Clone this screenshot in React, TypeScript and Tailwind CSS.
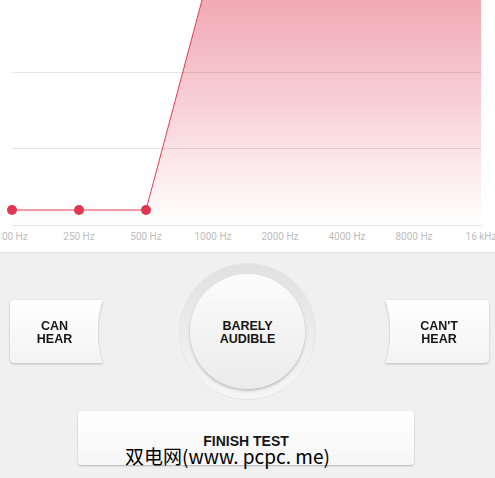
import React from "react";

const labels = ["100 Hz", "250 Hz", "500 Hz", "1000 Hz", "2000 Hz", "4000 Hz", "8000 Hz", "16 kHz"];
const points = [12, 79, 146];

const Chart = () => (
  <svg width="495" height="252" className="block">
    <defs>
      <linearGradient id="fill" x1="0" y1="0" x2="0" y2="1">
        <stop offset="0" stopColor="#f1a9b3" />
        <stop offset="1" stopColor="#ffffff" />
      </linearGradient>
    </defs>
    <polygon points="12,210 146,210 202,0 481,0 481,225 12,225" fill="url(#fill)" />
    <line x1="12" y1="72.5" x2="481" y2="72.5" stroke="#000" strokeOpacity="0.09" />
    <line x1="12" y1="148.5" x2="481" y2="148.5" stroke="#000" strokeOpacity="0.1" />
    <line x1="12" y1="225.5" x2="481" y2="225.5" stroke="#e4e4e4" />
    <polyline points="12,210 146,210 202,0" fill="none" stroke="#e23e55" strokeWidth="1" />
    {points.map((x) => (
      <circle key={x} cx={x} cy="210" r="5" fill="#e0364f" />
    ))}
    {labels.map((l, i) => (
      <text
        key={l}
        x={12 + i * 67}
        y="240"
        textAnchor="middle"
        fontSize="10"
        fill="#bdbdbd"
        fontFamily="Roboto, sans-serif"
      >
        {l}
      </text>
    ))}
  </svg>
);

const Label = ({ top, bottom }: { top: string; bottom: string }) => (
  <p className="text-center text-[12.5px] font-bold leading-[13px] text-[#161616] font-['Liberation_Sans',sans-serif]">
    {top}
    <br />
    {bottom}
  </p>
);

export default function App() {
  return (
    <div className="w-[495px] h-[478px] flex flex-col overflow-hidden bg-[#f0f0f0]">
      <div className="h-[252px] bg-white overflow-hidden">
        <Chart />
      </div>
      <div className="flex-1 border-t border-[#e2e2e2] relative">
        <div className="flex items-center pl-[10px] pt-[10px]">
          <div className="drop-shadow-[0_1px_1px_rgba(0,0,0,0.22)]">
            <div className="w-[93px] h-[63px] rounded-l-[4px] bg-gradient-to-b from-white to-[#f3f3f3] flex items-center justify-center pr-[4px] pt-[3px] [mask-image:radial-gradient(circle_at_190px_50%,transparent_102px,#000_102.5px)]">
              <Label top="CAN" bottom="HEAR" />
            </div>
          </div>
          <div className="ml-[76px] w-[137px] h-[137px] rounded-full bg-gradient-to-b from-[#e1e1e1] to-[#f6f6f6] border border-[#e6e6e6] flex items-center justify-center">
            <div className="w-[115px] h-[115px] rounded-full bg-gradient-to-b from-[#fcfcfc] to-[#ebebeb] shadow-[0_2px_3px_rgba(0,0,0,0.22)] flex items-center justify-center pt-[3px]">
              <Label top="BARELY" bottom="AUDIBLE" />
            </div>
          </div>
          <div className="ml-[69px] drop-shadow-[0_1px_1px_rgba(0,0,0,0.22)]">
            <div className="w-[104px] h-[63px] rounded-r-[4px] bg-gradient-to-b from-white to-[#f3f3f3] flex items-center justify-center pl-[4px] pt-[3px] [mask-image:radial-gradient(circle_at_-97px_50%,transparent_102px,#000_102.5px)]">
              <Label top="CAN'T" bottom="HEAR" />
            </div>
          </div>
        </div>
        <div className="ml-[78px] mt-[11px] w-[336px] h-[54px] rounded-[4px] bg-gradient-to-b from-white to-[#f6f6f6] shadow-[0_1px_2px_rgba(0,0,0,0.25)] flex items-center justify-center pt-[6px]">
          <span className="text-[14px] font-bold text-[#161616] font-['Liberation_Sans',sans-serif]">
            FINISH TEST
          </span>
        </div>
        <span className="absolute left-[125px] top-[193px] text-[19px] leading-[20px] text-black font-['Noto_Sans_CJK_SC',sans-serif] whitespace-nowrap">
          双电网(www. pcpc. me)
        </span>
      </div>
    </div>
  );
}
